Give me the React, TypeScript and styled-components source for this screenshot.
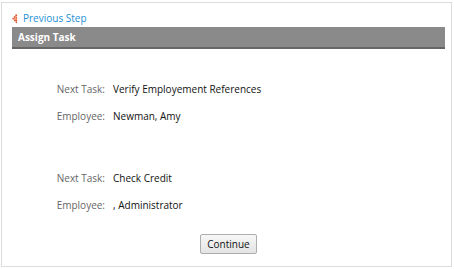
import React from "react";
import styled, { createGlobalStyle } from "styled-components";

const Global = createGlobalStyle`
  html, body { margin: 0; padding: 0; background: #fff; }
  body { font-family: "Open Sans", "Liberation Sans", sans-serif; font-size: 10px; color: #222; }
`;

const Frame = styled.div`
  box-sizing: border-box;
  margin: 2px 0 0 1px;
  width: 451px;
  height: 265px;
  border: 1px solid #dcdcdc;
  padding: 6px 6px 0 10px;
  display: flex;
  flex-direction: column;
`;

const BackLink = styled.a`
  display: flex;
  align-items: center;
  gap: 5px;
  height: 18px;
  color: #1d8fd6;
  font-size: 10px;
  text-decoration: none;
  cursor: pointer;
`;

const Header = styled.div`
  height: 20px;
  background: #8a8a8a;
  border-bottom: 2px solid #666;
  color: #fff;
  font-weight: 700;
  font-size: 10px;
  display: flex;
  align-items: center;
  padding-left: 6px;
`;

const Body = styled.div`
  padding-top: 33px;
  display: flex;
  flex-direction: column;
`;

const Group = styled.div<{ $gap: number }>`
  display: grid;
  grid-template-columns: 93px auto;
  column-gap: 8px;
  row-gap: 12px;
  margin-bottom: ${(p) => p.$gap}px;
`;

const Label = styled.div`
  text-align: right;
  color: #666;
  line-height: 15px;
`;

const Value = styled.div`
  color: #111;
  line-height: 15px;
`;

const Footer = styled.div`
  display: flex;
  justify-content: center;
`;

const Button = styled.button`
  font-family: "Open Sans", "Liberation Sans", sans-serif;
  font-size: 10px;
  color: #111;
  height: 20px;
  padding: 0 6px;
  background: linear-gradient(#f7f7f7, #e4e4e4);
  border: 1px solid #adadad;
  border-radius: 2px;
`;

const Arrow = () => (
  <svg width="6" height="9" viewBox="0 0 6 9">
    <path d="M4.5 0.5 L1 4.5 L4.5 8.5 Z" fill="#f0a080" stroke="#e2552b" strokeWidth="1.2" strokeLinejoin="round" strokeDasharray="1.6 0.8" />
  </svg>
);

export default function App() {
  return (
    <>
      <Global />
      <Frame>
        <BackLink>
          <Arrow />
          Previous Step
        </BackLink>
        <Header>Assign Task</Header>
        <Body>
          <Group $gap={47}>
            <Label>Next Task:</Label>
            <Value>Verify Employement References</Value>
            <Label>Employee:</Label>
            <Value>Newman, Amy</Value>
          </Group>
          <Group $gap={21}>
            <Label>Next Task:</Label>
            <Value>Check Credit</Value>
            <Label>Employee:</Label>
            <Value>, Administrator</Value>
          </Group>
          <Footer>
            <Button>Continue</Button>
          </Footer>
        </Body>
      </Frame>
    </>
  );
}
